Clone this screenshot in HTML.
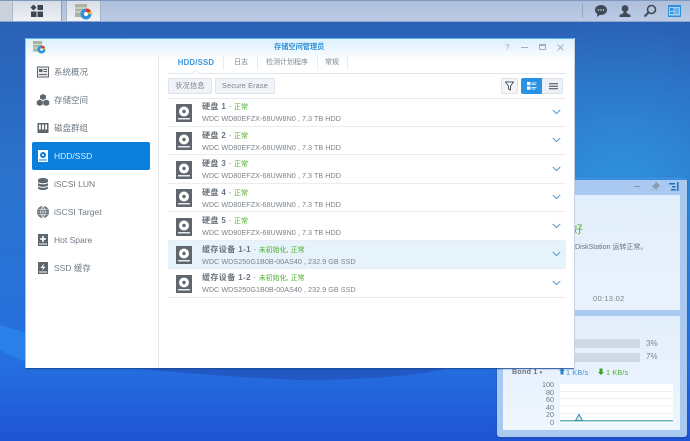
<!DOCTYPE html>
<html><head><meta charset="utf-8">
<style>
*{box-sizing:border-box}
html,body{margin:0;padding:0}
body{width:690px;height:441px;overflow:hidden;position:relative;font-family:"Liberation Sans","Noto Sans CJK SC",sans-serif;background:#2a62d0}
#w{position:absolute;left:0;top:0;width:690px;height:441px;overflow:hidden;filter:blur(.35px)}
.a{position:absolute;white-space:nowrap}
#bg{left:0;top:0;width:690px;height:441px;overflow:hidden}
.nav{position:absolute;left:32px;width:118px;height:28px;font-size:8.5px;color:#6f7a84;line-height:28px;padding-left:22px}
.nav svg{position:absolute;left:4px;top:7px}
.nav.on{background:#0a7fdc;color:#d8ecfb;border-radius:2px}
.row{position:absolute;left:168px;width:398px;height:28.4px;border-bottom:1px solid #e9edf0}
.row.on{background:#e6f3fb}
.row svg.d{position:absolute;left:8px;top:5px}
.t1{position:absolute;left:34px;top:2.5px;font-size:8px;color:#6c757d;font-weight:bold;line-height:12px;white-space:nowrap;letter-spacing:.4px}
.t1 span{font-weight:normal;color:#4fae2e;font-size:7px;letter-spacing:0}
.t1 i{font-style:normal;font-weight:normal;color:#888;font-size:7px}
.t2{position:absolute;left:34px;top:14.5px;font-size:7.2px;color:#7a838b;line-height:11px;white-space:nowrap;letter-spacing:.04px}
.chev{position:absolute;left:384px;top:10px}
.tab{position:absolute;top:56px;height:14px;line-height:14px;font-size:7px;color:#7c858d;text-align:center}
.sep{position:absolute;top:56px;width:1px;height:14px;background:#e8ecef}
.btn{position:absolute;top:78px;height:16px;border:1px solid #dde4ea;background:#f0f4f8;border-radius:2px;font-size:7.2px;line-height:14px;color:#7a838b;text-align:center;letter-spacing:.2px}
</style></head>
<body><div id="w">
<svg id="bg" class="a" viewBox="0 0 690 441">
<defs>
<linearGradient id="g" x1="0" y1="0" x2="0" y2="1"><stop offset="0" stop-color="#2a5fb2"/><stop offset=".4" stop-color="#2b72cc"/><stop offset=".82" stop-color="#2570e0"/><stop offset="1" stop-color="#1f54d4"/></linearGradient>
<radialGradient id="r" cx="620" cy="190" r="170" gradientUnits="userSpaceOnUse"><stop offset="0" stop-color="#3096dc" stop-opacity=".9"/><stop offset="1" stop-color="#3096dc" stop-opacity="0"/></radialGradient>
</defs>
<rect width="690" height="441" fill="url(#g)"/>
<rect width="690" height="441" fill="url(#r)"/>
<path d="M0 325 Q14 329 26 333 L26 362 Q12 356 0 350Z" fill="#2a80ea"/>
<path d="M130 368 Q210 376 300 380 Q400 380 450 368Z" fill="#2258c4"/>
</svg>

<!-- taskbar -->
<div class="a" style="left:0;top:0;width:690px;height:22px;background:linear-gradient(#aebfdc,#bccbe6);border-bottom:1px solid #8ea6cc;border-top:1px solid #7f97bd"></div>
<div class="a" style="left:0;top:1px;width:12px;height:20px;background:#c9d2dc"></div>
<div class="a" style="left:12px;top:1px;width:50px;height:20px;background:linear-gradient(#d6dce4,#eef1f4);border-right:1px solid #8f9db0;border-left:1px solid #aeb9c6"></div>
<div class="a" style="left:66px;top:1px;width:35px;height:20px;background:linear-gradient(#d9dfe6,#f0f3f6);border:1px solid #a8b4c4;border-width:0 1px"></div>
<svg class="a" style="left:30px;top:4px" width="14" height="14" viewBox="0 0 14 14"><path d="M3.500.5L6.500 3.500 3.500 6.500.5 3.500Z" fill="#3d4650"/><rect x="7.500" y="1" width="5.500" height="5" fill="#3d4650"/><rect x="1" y="7.500" width="5.500" height="5.500" fill="#3d4650"/><rect x="7.500" y="7.500" width="5.500" height="5.500" fill="#3d4650"/></svg>
<svg class="a" style="left:75px;top:3px" width="17" height="17" viewBox="0 0 17 17"><rect x="0" y="1" width="12" height="13" fill="#a9b5a0"/><path d="M0 5h12M0 9h12" stroke="#e8e8e0"/><circle cx="11" cy="11" r="5.500" fill="#2f92dc"/><path d="M11 11V5.500A5.500 5.500 0 0 1 16 8Z" fill="#d33c30"/><path d="M11 11L16 8A5.500 5.500 0 0 1 16.500 11Z" fill="#e8b838"/><circle cx="11" cy="11" r="2" fill="#fff"/></svg>
<div class="a" style="left:582px;top:4px;width:1px;height:14px;background:#96a6bc"></div>
<svg class="a" style="left:594px;top:4px" width="14" height="14" viewBox="0 0 14 14"><path d="M7 1C3.500 1 1 3.200 1 6c0 1.700.9 3 2.200 3.900L3 13l3-2.100c.3 0 .7.1 1 .1 3.500 0 6-2.200 6-5S10.500 1 7 1Z" fill="#3f4a56"/><circle cx="4.500" cy="6" r=".8" fill="#c5d2e6"/><circle cx="7" cy="6" r=".8" fill="#c5d2e6"/><circle cx="9.500" cy="6" r=".8" fill="#c5d2e6"/></svg>
<svg class="a" style="left:618px;top:4px" width="14" height="14" viewBox="0 0 14 14"><circle cx="7" cy="4.500" r="3.400" fill="#3f4a56"/><path d="M5.500 7h3v2l4 2v2H1.500v-2l4-2Z" fill="#3f4a56"/></svg>
<svg class="a" style="left:643px;top:4px" width="14" height="14" viewBox="0 0 14 14"><circle cx="8.500" cy="5.500" r="4" fill="none" stroke="#3f4a56" stroke-width="1.600"/><path d="M5.500 8.500L1.500 12.500" stroke="#3f4a56" stroke-width="2"/></svg>
<svg class="a" style="left:668px;top:5px" width="13" height="12" viewBox="0 0 13 12"><rect width="13" height="12" fill="#2f8fd8"/><rect x="1" y="2" width="11" height="8.500" fill="#a6d3f2"/><rect x="2" y="3" width="3.500" height="3" fill="#2f8fd8"/><rect x="2" y="7" width="3.500" height="2" fill="#2f8fd8"/><path d="M6.500 4h4.500M6.500 6h4.500M6.500 8h4.500" stroke="#2f8fd8"/></svg>

<!-- widget panel -->
<div class="a" style="left:497px;top:177px;width:190px;height:260px;background:#a9c9f0;border-radius:3px;border-top:3px solid #3a8ee0;box-shadow:0 1px 2px rgba(20,50,110,.4)"></div>
<div class="a" style="left:503px;top:195px;width:177px;height:115px;background:linear-gradient(#e2eefb,#eaf3fd)"></div>
<div class="a" style="left:503px;top:316px;width:177px;height:114px;background:linear-gradient(#e2eefb,#eff6fe)"></div>
<div class="a" style="left:634px;top:186px;width:6px;height:1px;background:#7f93a8"></div>
<svg class="a" style="left:651px;top:182px" width="9" height="9" viewBox="0 0 9 9"><path d="M5 0L9 4 7.500 4.500 5.500 6.500 5.500 8 1 3.500 2.500 3.500 4.500 1.500Z M2.500 5.500L.5 8.500" fill="#8a9bae" stroke="#8a9bae" stroke-width=".5"/></svg>
<svg class="a" style="left:669px;top:182px" width="10" height="9" viewBox="0 0 10 9"><path d="M0 1h6v1.500H0ZM3 4h3.500v1.500H3ZM2 7h5v1.500H2Z" fill="#1e6fb8"/><rect x="8" y="0" width="1.500" height="9" fill="#1e6fb8"/></svg>
<div class="a" style="left:572px;top:223px;font-size:11px;color:#4fae2e;line-height:14px">好</div>
<div class="a" style="left:575px;top:243px;font-size:7px;color:#6a737c;line-height:10px">DiskStation 运转正常。</div>
<div class="a" style="left:593px;top:294px;font-size:7.500px;color:#7b858e;line-height:10px;letter-spacing:.3px">00:13:02</div>
<div class="a" style="left:574px;top:339px;width:66px;height:9px;background:#ced9e3"></div>
<div class="a" style="left:574px;top:353px;width:66px;height:9px;background:#ced9e3"></div>
<div class="a" style="left:646px;top:339px;font-size:8px;color:#7b858e;line-height:10px">3%</div>
<div class="a" style="left:646px;top:352px;font-size:8px;color:#7b858e;line-height:10px">7%</div>
<div class="a" style="left:512px;top:366px;font-size:7.200px;font-weight:bold;color:#6a737c;line-height:11px;letter-spacing:.2px">Bond 1 <span style="font-size:5px">▾</span></div>
<svg class="a" style="left:559px;top:368px" width="6" height="7" viewBox="0 0 6 7"><path d="M3 0L6 3H4.500V6.500H1.500V3H0Z" fill="#2a85cc"/></svg>
<div class="a" style="left:566px;top:367px;font-size:7.200px;color:#3b93d6;line-height:11px;letter-spacing:.2px">1 KB/s</div>
<svg class="a" style="left:598px;top:368px" width="6" height="7" viewBox="0 0 6 7"><path d="M3 7L6 4H4.500V.5H1.500V4H0Z" fill="#3fa02a"/></svg>
<div class="a" style="left:606px;top:367px;font-size:7.200px;color:#4fae2e;line-height:11px;letter-spacing:.2px">1 KB/s</div>
<div class="a" style="left:530px;top:381px;width:24px;font-size:7.200px;line-height:7.600px;color:#6f7a84;text-align:right;white-space:normal">100<br>80<br>60<br>40<br>20<br>0</div>
<svg class="a" style="left:560px;top:384px" width="113" height="39" viewBox="0 0 113 39">
<rect width="113" height="39" fill="#fff"/>
<path d="M0 7.500h113M0 14.500h113M0 22h113M0 29.500h113" stroke="#e6ebf0" stroke-width=".7"/>
<path d="M15.500 36.500L19 30.500 22.500 36.500Z" fill="#e4f0d0" stroke="#2d84b8" stroke-width="1"/>
<path d="M0 36.800H113" stroke="#3a96a8" stroke-width="1.200"/>
</svg>

<!-- window -->
<div class="a" style="left:26px;top:38px;width:548px;height:330px;background:#fff;border-top:1px solid #58b4f0;box-shadow:-1px 0 0 #a8c0dc,1px 0 0 #c6d2de,0 1px 1px #1c4c96;overflow:hidden">
<div style="position:absolute;left:0;top:0;width:548px;height:22px;background:linear-gradient(#dcf0fd,#fff)"></div>
</div>
<svg class="a" style="left:33px;top:41px" width="13" height="13" viewBox="0 0 13 13"><rect x="0" y="0" width="9" height="10.500" fill="#a9b5a0"/><path d="M0 3.500h9M0 7h9" stroke="#e8e8e0" stroke-width=".7"/><circle cx="8.500" cy="8.500" r="4" fill="#2f92dc"/><path d="M8.500 8.500V4.500A4 4 0 0 1 12 6.500Z" fill="#d33c30"/><path d="M8.500 8.500L12 6.500A4 4 0 0 1 12.500 8.500Z" fill="#e8b838"/><circle cx="8.500" cy="8.500" r="1.300" fill="#fff"/></svg>
<div class="a" style="left:274px;top:42px;font-size:7.200px;font-weight:bold;color:#2d8ed6;line-height:10px">存储空间管理员</div>
<div class="a" style="left:505px;top:42px;font-size:8.500px;color:#a0a8af;line-height:10px">?</div>
<div class="a" style="left:521px;top:47px;width:7px;height:1px;background:#a6aeb5"></div>
<div class="a" style="left:539px;top:44px;width:7px;height:6px;border:1px solid #a6aeb5;border-top-width:2px"></div>
<svg class="a" style="left:557px;top:44px" width="7" height="7" viewBox="0 0 7 7"><path d="M.5.500L6.500 6.500M6.500.500L.5 6.500" stroke="#a6aeb5" stroke-width=".9"/></svg>

<div class="a" style="left:158px;top:56px;width:1px;height:312px;background:#e6e9ec"></div>

<!-- sidebar -->
<div class="nav" style="top:58px"><svg width="14" height="14" viewBox="0 0 14 14"><rect x="1.500" y="2" width="11" height="10" fill="#e8eaec" stroke="#5e666e"/><rect x="3" y="4" width="3.500" height="3" fill="#5e666e"/><path d="M7.500 4.500h3.500M7.500 6.500h3.500M3 9.500h8" stroke="#5e666e"/></svg>系统概况</div>
<div class="nav" style="top:86px"><svg width="14" height="14" viewBox="0 0 14 14"><path d="M7 1L10 2.500V5.500L7 7 4 5.500V2.500ZM3.800 6.500L6.800 8V11.500L3.800 13 .8 11.500V8ZM10.200 6.500L13.200 8V11.500L10.200 13 7.200 11.500V8Z" fill="#5e666e"/></svg>存储空间</div>
<div class="nav" style="top:114px"><svg width="14" height="14" viewBox="0 0 14 14"><rect x="1.500" y="2" width="11" height="10" fill="#5e666e"/><rect x="3" y="3.500" width="1.800" height="5" fill="#fff"/><rect x="6.100" y="3.500" width="1.800" height="5" fill="#fff"/><rect x="9.200" y="3.500" width="1.800" height="5" fill="#fff"/></svg>磁盘群组</div>
<div class="nav on" style="top:142px"><svg width="14" height="14" viewBox="0 0 14 14"><rect x="2" y="1" width="10" height="12" fill="#fff"/><circle cx="7" cy="6" r="3" fill="#0a7fdc"/><circle cx="7" cy="6" r="1" fill="#fff"/><rect x="3" y="10.500" width="8" height="1" fill="#0a7fdc"/></svg>HDD/SSD</div>
<div class="nav" style="top:170px"><svg width="14" height="14" viewBox="0 0 14 14"><path d="M2 3c0-1 2.200-2 5-2s5 1 5 2v1.500c0 1-2.200 1.800-5 1.800S2 5.500 2 4.500ZM2 6c1 .9 3 1.300 5 1.300S11 6.900 12 6v2c0 1-2.200 1.800-5 1.800S2 9 2 8ZM2 9.500c1 .9 3 1.300 5 1.300s4-.4 5-1.300V11c0 1-2.200 2-5 2s-5-1-5-2Z" fill="#5e666e"/></svg>iSCSI LUN</div>
<div class="nav" style="top:198px"><svg width="14" height="14" viewBox="0 0 14 14"><circle cx="7" cy="7" r="6" fill="#5e666e"/><path d="M1 7h12M2 4.200h10M2 9.800h10M7 1v12M7 1C4 4 4 10 7 13M7 1c3 3 3 9 0 12" fill="none" stroke="#fff" stroke-width=".6"/></svg>iSCSI Target</div>
<div class="nav" style="top:226px"><svg width="14" height="14" viewBox="0 0 14 14"><rect x="2" y="1" width="10" height="12" fill="#5e666e"/><path d="M7 3v6M4 6h6" stroke="#fff" stroke-width="1.600"/><rect x="3" y="10.500" width="8" height="1" fill="#fff"/></svg>Hot Spare</div>
<div class="nav" style="top:254px"><svg width="14" height="14" viewBox="0 0 14 14"><rect x="2" y="1" width="10" height="12" fill="#5e666e"/><path d="M8 2.500L4.500 7H7L6 9.800 9.500 5.800H7.200Z" fill="#fff"/><rect x="3" y="10.500" width="8" height="1" fill="#fff"/></svg>SSD 缓存</div>

<!-- tabs -->
<div class="tab" style="left:169px;width:54px;font-weight:bold;color:#3d96d8;font-size:7.800px;letter-spacing:.2px">HDD/SSD</div>
<div class="sep" style="left:223px"></div><div class="sep" style="left:257px"></div><div class="sep" style="left:317px"></div><div class="sep" style="left:347px"></div>
<div class="tab" style="left:224px;width:34px">日志</div>
<div class="tab" style="left:257px;width:60px">检测计划程序</div>
<div class="tab" style="left:317px;width:30px">常规</div>
<div class="a" style="left:168px;top:73px;width:398px;height:1px;background:#e3e7ea"></div>
<svg class="a" style="left:191px;top:70px" width="9" height="5" viewBox="0 0 9 5"><path d="M0 4L4.500 .5 9 4" fill="#fff" stroke="#e3e7ea"/></svg>

<div class="btn" style="left:168px;width:44px">状况信息</div>
<div class="btn" style="left:215px;width:60px">Secure Erase</div>
<div class="a" style="left:501px;top:78px;width:17px;height:16px;background:#f3f5f7;border:1px solid #dde2e7;border-radius:2px"></div>
<svg class="a" style="left:505px;top:81px" width="9" height="10" viewBox="0 0 9 10"><path d="M.5 1h8L5.500 5v4L3.500 8V5Z" fill="#fff" stroke="#4b545c" stroke-width="1"/></svg>
<div class="a" style="left:521px;top:78px;width:21px;height:16px;background:#2a92e4;border-radius:2px 0 0 2px"></div>
<svg class="a" style="left:527px;top:82px" width="10" height="8" viewBox="0 0 10 8"><rect width="3.500" height="3.200" fill="#fff"/><rect y="4.500" width="3.500" height="3.200" fill="#fff"/><path d="M4.500 1h5M4.500 2.500h4M4.500 5.500h5M4.500 7h4" stroke="#cfe6f8" stroke-width=".9"/></svg>
<div class="a" style="left:542px;top:78px;width:21px;height:16px;background:#edf1f5;border:1px solid #dde2e7;border-left:0;border-radius:0 2px 2px 0"></div>
<svg class="a" style="left:549px;top:83px" width="9" height="7" viewBox="0 0 9 7"><path d="M0 .7h9M0 3.200h9M0 5.800h9" stroke="#3f4850" stroke-width="1"/></svg>

<div class="a" style="left:168px;top:98px;width:398px;height:1px;background:#e6eaee"></div>

<!-- rows -->
<div class="row" style="top:98.500px"><svg class="d" width="16" height="18" viewBox="0 0 16 18"><rect width="16" height="18" fill="#5f666e"/><circle cx="8" cy="7.500" r="5" fill="#fff"/><circle cx="8" cy="7.500" r="1.700" fill="#5f666e"/><rect x="2" y="14" width="12" height="1.500" fill="#e6e8ea"/></svg><div class="t1">硬盘 1 <i>- </i><span>正常</span></div><div class="t2">WDC WD80EFZX-68UW8N0 , 7.3 TB HDD</div><svg class="chev" width="9" height="6" viewBox="0 0 9 6"><path d="M.8 1L4.500 4.600 8.200 1" fill="none" stroke="#5b9fd0" stroke-width="1.100"/></svg></div>
<div class="row" style="top:127px"><svg class="d" width="16" height="18" viewBox="0 0 16 18"><rect width="16" height="18" fill="#5f666e"/><circle cx="8" cy="7.500" r="5" fill="#fff"/><circle cx="8" cy="7.500" r="1.700" fill="#5f666e"/><rect x="2" y="14" width="12" height="1.500" fill="#e6e8ea"/></svg><div class="t1">硬盘 2 <i>- </i><span>正常</span></div><div class="t2">WDC WD80EFZX-68UW8N0 , 7.3 TB HDD</div><svg class="chev" width="9" height="6" viewBox="0 0 9 6"><path d="M.8 1L4.500 4.600 8.200 1" fill="none" stroke="#5b9fd0" stroke-width="1.100"/></svg></div>
<div class="row" style="top:155.500px"><svg class="d" width="16" height="18" viewBox="0 0 16 18"><rect width="16" height="18" fill="#5f666e"/><circle cx="8" cy="7.500" r="5" fill="#fff"/><circle cx="8" cy="7.500" r="1.700" fill="#5f666e"/><rect x="2" y="14" width="12" height="1.500" fill="#e6e8ea"/></svg><div class="t1">硬盘 3 <i>- </i><span>正常</span></div><div class="t2">WDC WD80EFZX-68UW8N0 , 7.3 TB HDD</div><svg class="chev" width="9" height="6" viewBox="0 0 9 6"><path d="M.8 1L4.500 4.600 8.200 1" fill="none" stroke="#5b9fd0" stroke-width="1.100"/></svg></div>
<div class="row" style="top:184px"><svg class="d" width="16" height="18" viewBox="0 0 16 18"><rect width="16" height="18" fill="#5f666e"/><circle cx="8" cy="7.500" r="5" fill="#fff"/><circle cx="8" cy="7.500" r="1.700" fill="#5f666e"/><rect x="2" y="14" width="12" height="1.500" fill="#e6e8ea"/></svg><div class="t1">硬盘 4 <i>- </i><span>正常</span></div><div class="t2">WDC WD80EFZX-68UW8N0 , 7.3 TB HDD</div><svg class="chev" width="9" height="6" viewBox="0 0 9 6"><path d="M.8 1L4.500 4.600 8.200 1" fill="none" stroke="#5b9fd0" stroke-width="1.100"/></svg></div>
<div class="row" style="top:212.500px"><svg class="d" width="16" height="18" viewBox="0 0 16 18"><rect width="16" height="18" fill="#5f666e"/><circle cx="8" cy="7.500" r="5" fill="#fff"/><circle cx="8" cy="7.500" r="1.700" fill="#5f666e"/><rect x="2" y="14" width="12" height="1.500" fill="#e6e8ea"/></svg><div class="t1">硬盘 5 <i>- </i><span>正常</span></div><div class="t2">WDC WD80EFZX-68UW8N0 , 7.3 TB HDD</div><svg class="chev" width="9" height="6" viewBox="0 0 9 6"><path d="M.8 1L4.500 4.600 8.200 1" fill="none" stroke="#5b9fd0" stroke-width="1.100"/></svg></div>
<div class="row on" style="top:241px"><svg class="d" width="16" height="18" viewBox="0 0 16 18"><rect width="16" height="18" fill="#5f666e"/><circle cx="8" cy="7.500" r="5" fill="#fff"/><circle cx="8" cy="7.500" r="1.700" fill="#5f666e"/><rect x="2" y="14" width="12" height="1.500" fill="#e6e8ea"/></svg><div class="t1">缓存设备 1-1 <i>- </i><span>未初始化, 正常</span></div><div class="t2">WDC WDS250G1B0B-00AS40 , 232.9 GB SSD</div><svg class="chev" width="9" height="6" viewBox="0 0 9 6"><path d="M.8 1L4.500 4.600 8.200 1" fill="none" stroke="#5b9fd0" stroke-width="1.100"/></svg></div>
<div class="row" style="top:269.500px"><svg class="d" width="16" height="18" viewBox="0 0 16 18"><rect width="16" height="18" fill="#5f666e"/><circle cx="8" cy="7.500" r="5" fill="#fff"/><circle cx="8" cy="7.500" r="1.700" fill="#5f666e"/><rect x="2" y="14" width="12" height="1.500" fill="#e6e8ea"/></svg><div class="t1">缓存设备 1-2 <i>- </i><span>未初始化, 正常</span></div><div class="t2">WDC WDS250G1B0B-00AS40 , 232.9 GB SSD</div><svg class="chev" width="9" height="6" viewBox="0 0 9 6"><path d="M.8 1L4.500 4.600 8.200 1" fill="none" stroke="#5b9fd0" stroke-width="1.100"/></svg></div>
</div></body></html>
